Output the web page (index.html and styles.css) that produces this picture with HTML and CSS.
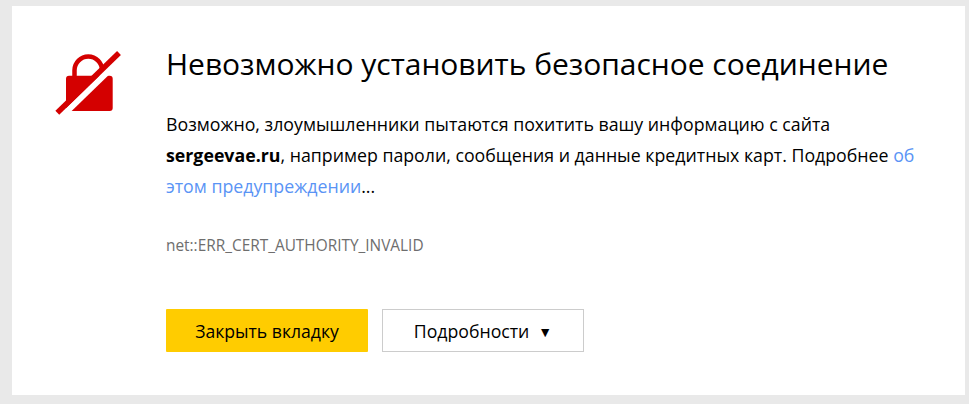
FILE: index.html
```html
<!DOCTYPE html>
<html lang="ru">
<head>
<meta charset="utf-8">
<title>Невозможно установить безопасное соединение</title>
<link rel="stylesheet" href="styles.css">
</head>
<body>
<main class="card">
  <div class="icon-col">
    <svg class="lock" width="75" height="75" viewBox="0 0 75 75" aria-hidden="true">
      <rect class="lock-body" x="16" y="30.700" width="46.700" height="35.300" rx="3" />
      <path class="lock-shackle" d="M24.500 31 V25.300 A13.800 13.800 0 0 1 52.100 25.300" />
      <path class="lock-gap" d="M11.300 71.800 L73 12" />
      <path class="lock-slash" d="M7.300 67.700 L69 8" />
    </svg>
  </div>
  <div class="content">
    <h1 class="title">Невозможно установить безопасное соединение</h1>
    <p class="message">Возможно, злоумышленники пытаются похитить вашу информацию с сайта <b>sergeevae.ru</b>, например пароли, сообщения и данные кредитных карт. Подробнее <a class="link" href="#">об этом предупреждении</a>...</p>
    <p class="code">net::ERR_CERT_AUTHORITY_INVALID</p>
    <div class="actions">
      <button class="btn btn-primary">Закрыть вкладку</button>
      <button class="btn btn-secondary">Подробности<span class="caret">▼</span></button>
    </div>
  </div>
</main>
</body>
</html>
```
FILE: styles.css
```css
html, body { height: 100%; }
body {
  margin: 0;
  padding: 6px 4px 9px 12px;
  box-sizing: border-box;
  background: #e9e9e9;
  font-family: "Open Sans", "Noto Sans", sans-serif;
  color: #000;
  overflow: hidden;
}
.card {
  background: #fff;
  height: 100%;
  display: flex;
  box-sizing: border-box;
  padding: 0 35px 0 0;
}
.icon-col { width: 154px; flex: none; padding: 39px 0 0 38px; box-sizing: border-box; }
.lock { display: block; }
.lock-shackle { fill: none; stroke: #d40000; stroke-width: 4.500; }
.lock-body { fill: #d40000; }
.lock-gap { stroke: #fff; stroke-width: 6; fill: none; }
.lock-slash { stroke: #d40000; stroke-width: 5.500; fill: none; }
.content { flex: 1; min-width: 0; padding-top: 36px; }
.title { margin: 0; font-size: 30px; line-height: 44px; font-weight: 400; letter-spacing: -0.03px; }
.message { margin: 23px 0 0; font-size: 17.750px; line-height: 31px; }
.link { color: #5a94f5; text-decoration: none; }
.code { margin: 34px 0 0; font-size: 15.400px; line-height: 20px; color: #6e6e6e; }
.actions { display: flex; gap: 14px; margin-top: 53px; }
.btn {
  width: 202px;
  height: 43px;
  font: inherit;
  color: #000;
  box-sizing: border-box;
  padding: 0;
}
.btn-primary { background: #ffcc00; border: 0; border-radius: 1px; font-size: 17.600px; }
.btn-secondary { background: #fff; border: 1px solid #ccc; font-size: 17.700px; }
.caret { font-size: 14px; margin-left: 9px; vertical-align: 1px; }
```
